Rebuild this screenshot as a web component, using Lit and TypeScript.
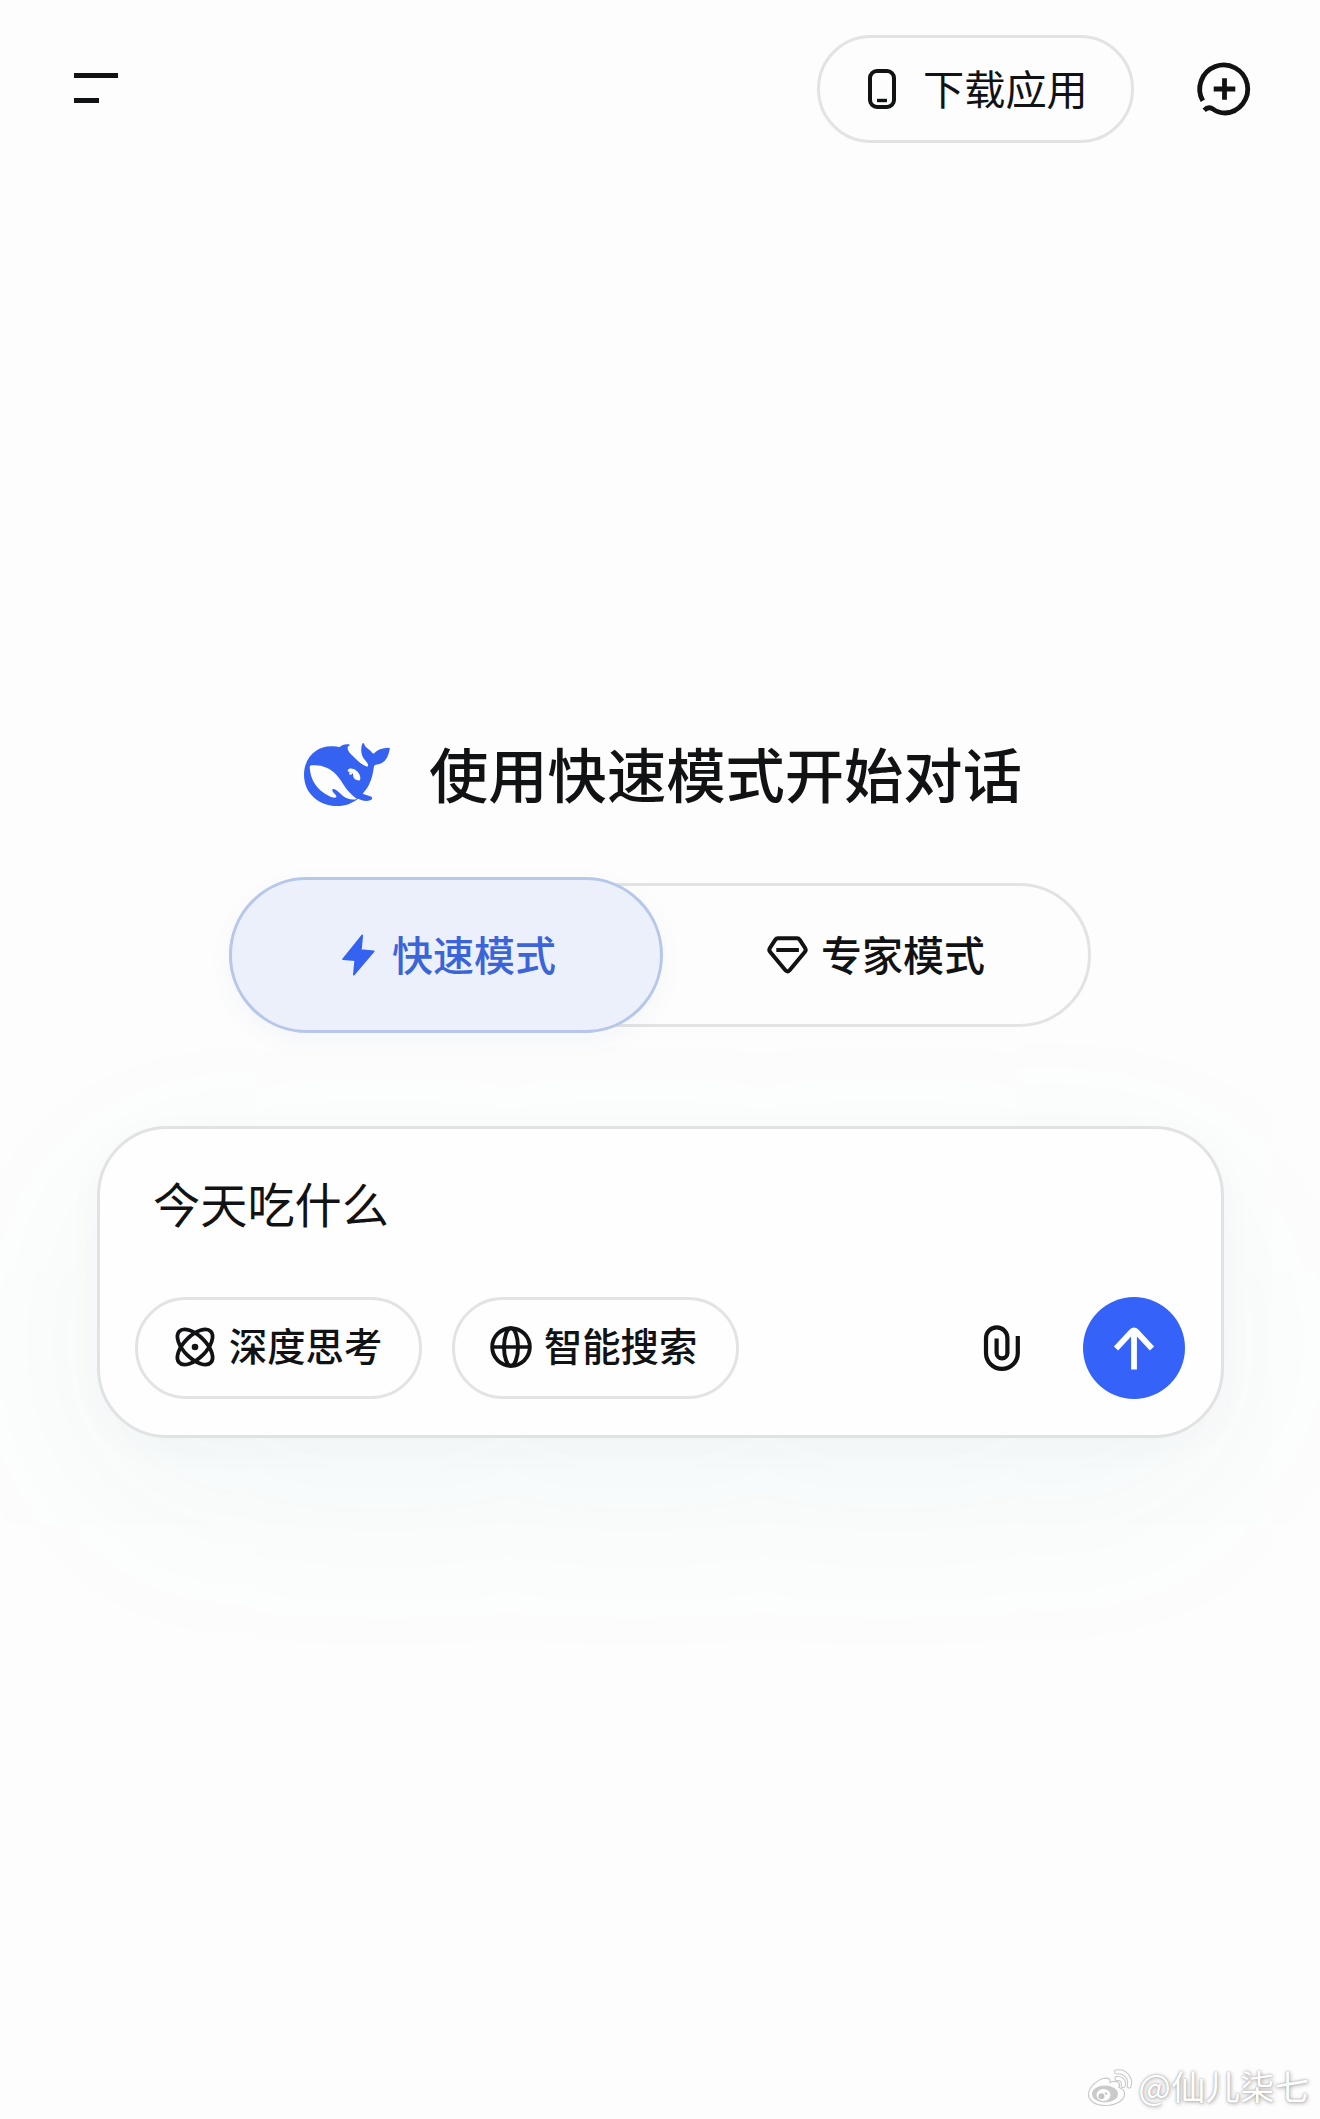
import { LitElement, html, css, svg } from "lit";
import { customElement, property } from "lit/decorators.js";

const icons: Record<string, unknown> = {
  phone: svg`<svg width="28" height="40" viewBox="0 0 28 40" fill="none" stroke="currentColor" stroke-width="4"><rect x="2" y="2" width="24" height="36" rx="7"/><path d="M9 31.500h10" stroke-width="3.400"/></svg>`,
  newChat: svg`<svg width="56" height="56" viewBox="0 0 56 56" fill="none" stroke="currentColor" stroke-width="4.800"><path d="M5.800 39.800A24 24 0 1 1 28 52c-5 0-8.600-1.500-11.500-3.600-3-2.200-6.500-2-9.300.8"/><path d="M27.500 17.200v21.600M16.700 28h21.600"/></svg>`,
  whale: svg`<svg width="87" height="67" viewBox="39 33 261 201"><path fill="currentColor" d="M42 134C42 86 76 49 124 49c10 0 17 2 25 2 6-6 17-10 28-8 3 1 2 3 0 4-5 3-5 8-3 13 4 10 12 15 23 26 11 11 21 19 31 23 6 2 8-2 5-8-3-7-12-13-16-23-5-12-4-27 0-37 1-3 4-3 5 0 4 12 14 14 20 22 4 5 6 9 11 7 9-12 23-16 42-17 4 0 5 2 4 5-6 32-18 43-41 46-6 1-6 4-7 11-4 28-12 55-33 76 8 4 19 5 26 9 5 4 2 10-4 11-13 4-26 0-36-5-18 14-37 22-62 22-56 0-100-39-100-94z"/><path fill="#fdfdfd" d="M65 106c28-3 55 7 74 28 20 21 26 47 62 73-16 4-30 0-42-9-9-7-16-16-25-20-8-3-9 2-5 8 5 7 12 11 10 15-3 4-13 2-22-3-37-18-56-48-58-86 0-4 2-6 6-6z"/><path fill="#fdfdfd" d="M174 119c3-4 10-5 17-2 12 5 21 18 20 29 0 5-4 6-9 5-8-2-13-8-13-16 0-7-4-10-12-10-4 0-5-3-3-6z"/><circle cx="182" cy="130" r="4.500" fill="#fdfdfd"/></svg>`,
  bolt: svg`<svg width="33" height="42" viewBox="0 0 33 42" fill="currentColor" stroke="currentColor" stroke-width="1.600" stroke-linejoin="round"><path d="M20.300 1.200 1 25.300 13.200 26.300 11.800 40.800 31.800 17.200 18.900 16z"/></svg>`,
  gem: svg`<svg width="41" height="38" viewBox="0 0 41 38" fill="none" stroke="currentColor" stroke-width="4" stroke-linejoin="round"><path d="M11 2.300h19c1.300 0 2.100.5 2.800 1.500l5.300 8.200c.9 1.400.8 2.700-.3 4L22.600 34.300c-1.300 1.500-2.900 1.500-4.200 0L3.200 16c-1.100-1.300-1.200-2.600-.3-4l5.300-8.200c.7-1 1.500-1.500 2.800-1.500z"/><path d="M9.300 14h22.600"/></svg>`,
  atom: svg`<svg width="40" height="40" viewBox="0 0 40 40" fill="none" stroke="currentColor" stroke-width="3.800"><ellipse cx="20" cy="20" rx="22.200" ry="11.200" transform="rotate(45 20 20)"/><ellipse cx="20" cy="20" rx="22.200" ry="11.200" transform="rotate(-45 20 20)"/><circle cx="20" cy="20" r="3.300" fill="currentColor" stroke="none"/></svg>`,
  globe: svg`<svg width="42" height="42" viewBox="0 0 42 42" fill="none" stroke="currentColor" stroke-width="3.900"><circle cx="21" cy="21" r="18.800"/><ellipse cx="21" cy="21" rx="7" ry="18.800"/><path d="M2 21h38" stroke-width="3.300"/></svg>`,
  clip: svg`<svg width="36" height="46" viewBox="0 0 36 46" fill="none" stroke="currentColor" stroke-width="4.200"><path d="M33.800 11v17a15.900 15.900 0 0 1-31.800 0V13a10.700 10.700 0 0 1 21.400 0v15a5.400 5.400 0 0 1-10.800 0V13.500"/></svg>`,
  arrow: svg`<svg width="42" height="44" viewBox="0 0 42 44" fill="none" stroke="currentColor" stroke-width="5.800"><path d="M21 43.500V4"/><path d="M3 22.500 18.800 5.600q2.200-2.200 4.400 0L39 22.500"/></svg>`,
  weibo: svg`<svg width="46" height="38" viewBox="0 0 46 38"><path d="M16 9.500c-6 1.500-14.500 9-14.500 16 0 6.500 7.500 11 17 11 11 0 19-5.500 19-11.500 0-3.500-2.500-5.500-5.500-6.500 1.500-4-.5-8-9-5 .8-3-1.500-5.500-7-4z" fill="#fff" stroke="#c8c8c8" stroke-width="1.200"/><ellipse cx="18" cy="25" rx="13" ry="8.500" fill="#cacaca"/><ellipse cx="16.500" cy="26" rx="7" ry="6" fill="#fff"/><circle cx="14.500" cy="27.300" r="3" fill="#c4c4c4"/><circle cx="19" cy="24.500" r="1.200" fill="#c4c4c4"/><path d="M30 9.500c4-.7 7.500 3 6.200 7M29.500 3c8-1.500 15 6 12.700 14" fill="none" stroke="#c8c8c8" stroke-width="5" stroke-linecap="round"/><path d="M30 9.500c4-.7 7.500 3 6.200 7M29.500 3c8-1.500 15 6 12.700 14" fill="none" stroke="#fff" stroke-width="3" stroke-linecap="round"/></svg>`,
};

@customElement("ui-icon")
class UiIcon extends LitElement {
  static styles = css`
    :host { display: flex; flex: none; }
    svg { display: block; overflow: visible; }
  `;
  @property() name = "";
  render() {
    return html`${icons[this.name]}`;
  }
}

@customElement("app-root")
class AppRoot extends LitElement {
  static styles = css`
    :host {
      display: block;
      font-family: "Noto Sans CJK SC", sans-serif;
      color: #111214;
    }
    * { box-sizing: border-box; }
    button {
      font: inherit;
      color: inherit;
      margin: 0;
      padding: 0;
      background: none;
      border: 0;
      display: flex;
      align-items: center;
      white-space: nowrap;
    }
    .page {
      height: 2119px;
      background: #fdfdfd;
      display: flex;
      flex-direction: column;
      overflow: hidden;
    }
    .label { margin-bottom: 5px; }
    .top {
      display: flex;
      align-items: center;
      padding: 35px 67px 0 74px;
    }
    .menu {
      flex-direction: column;
      align-items: flex-start;
      gap: 20px;
      margin: 0 auto 2px 0;
    }
    .bar { width: 44px; height: 5px; background: #111214; }
    .bar.short { width: 25px; }
    .download {
      width: 317px;
      height: 108px;
      border: 3px solid #e3e3e3;
      border-radius: 54px;
      padding-left: 48px;
      gap: 27px;
      font-size: 41.200px;
      line-height: 60px;
      margin-right: 63px;
    }
    .hero {
      display: flex;
      align-items: center;
      height: 90px;
      margin: 586px 0 0 303px;
      gap: 39px;
    }
    .logo { color: #3562f0; }
    .title { margin: 0 0 5px; font-size: 59.300px; font-weight: 500; line-height: 90px; white-space: nowrap; }
    .modes {
      display: flex;
      align-items: center;
      width: 862px;
      height: 144px;
      margin: 64px 0 0 229px;
      border: 3px solid #e3e3e3;
      border-radius: 72px;
      font-size: 41px;
      font-weight: 500;
      line-height: 60px;
    }
    .modes .label { margin-bottom: 4px; }
    .mode { height: 138px; flex: 1; gap: 13px; padding-left: 104px; }
    .mode.active {
      flex: none;
      width: 434px;
      height: 156px;
      margin: -6px 0 -6px -3px;
      padding-left: 110px;
      gap: 17px;
      border: 3px solid #b7c7ea;
      border-radius: 78px;
      background: #ebf0fb;
      color: #3c64d9;
      box-shadow: 0 8px 24px rgba(60, 90, 160, 0.05);
    }
    .mode.active ui-icon { color: #3562f0; }
    .composer {
      width: 1127px;
      height: 312px;
      margin: 99px 0 0 97px;
      padding: 39px 36px 0 35px;
      border: 3px solid #e1e2e3;
      border-radius: 70px;
      background: #fefefe;
      box-shadow: 0 10px 36px rgba(60, 70, 80, 0.03), 0 60px 210px rgba(60, 160, 165, 0.055);
    }
    .prompt { padding-left: 18px; font-size: 47.200px; line-height: 70px; height: 70px; }
    .tools { display: flex; align-items: center; margin-top: 59px; height: 102px; }
    .chip {
      width: 287px;
      height: 102px;
      border: 3px solid #e3e3e3;
      border-radius: 51px;
      margin-right: 30px;
      padding-left: 37px;
      gap: 14px;
      font-size: 38.300px;
      font-weight: 500;
      line-height: 56px;
      flex: none;
    }
    .chip ui-icon { margin-bottom: 2px; }
    .chip .label { margin-bottom: 7px; }
    .chip.search { gap: 12px; padding-left: 35px; }
    .attach { margin: 0 63px 0 auto; }
    .send {
      width: 102px;
      height: 102px;
      border-radius: 50%;
      background: #3562f8;
      color: #fff;
      justify-content: center;
    }
    .credit {
      display: flex;
      align-items: center;
      align-self: flex-end;
      margin: auto 11px 5px 0;
      gap: 5px;
      font-size: 34.500px;
      line-height: 48px;
      color: #fff;
      text-shadow: 0 0 2px #999, 1px 1px 4px #aaa;
    }
  `;

  render() {
    return html`
      <main class="page">
        <header class="top">
          <button class="menu"><span class="bar"></span><span class="bar short"></span></button>
          <button class="download"><ui-icon name="phone"></ui-icon><span class="label">下载应用</span></button>
          <button><ui-icon name="newChat"></ui-icon></button>
        </header>
        <section class="hero">
          <ui-icon class="logo" name="whale"></ui-icon>
          <h1 class="title">使用快速模式开始对话</h1>
        </section>
        <nav class="modes">
          <button class="mode active"><ui-icon name="bolt"></ui-icon><span class="label">快速模式</span></button>
          <button class="mode"><ui-icon name="gem"></ui-icon><span class="label">专家模式</span></button>
        </nav>
        <section class="composer">
          <div class="prompt">今天吃什么</div>
          <div class="tools">
            <button class="chip"><ui-icon name="atom"></ui-icon><span class="label">深度思考</span></button>
            <button class="chip search"><ui-icon name="globe"></ui-icon><span class="label">智能搜索</span></button>
            <button class="attach"><ui-icon name="clip"></ui-icon></button>
            <button class="send"><ui-icon name="arrow"></ui-icon></button>
          </div>
        </section>
        <footer class="credit"><ui-icon name="weibo"></ui-icon><span class="label">@仙儿柒七</span></footer>
      </main>
    `;
  }
}
